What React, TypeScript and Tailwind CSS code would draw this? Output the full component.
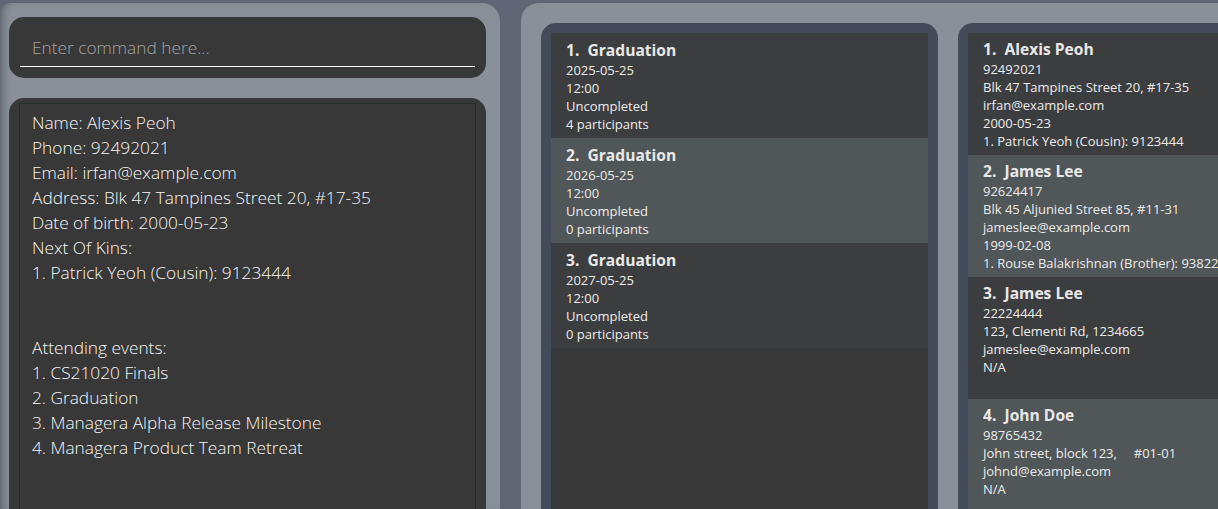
import React from "react";

interface EventData {
  title: string;
  date: string;
  time: string;
  status: string;
  participants: string;
}

interface PersonData {
  name: string;
  phone: string;
  address: string;
  email: string;
  dob: string;
  kin?: string;
}

const events: EventData[] = [
  { title: "Graduation", date: "2025-05-25", time: "12:00", status: "Uncompleted", participants: "4 participants" },
  { title: "Graduation", date: "2026-05-25", time: "12:00", status: "Uncompleted", participants: "0 participants" },
  { title: "Graduation", date: "2027-05-25", time: "12:00", status: "Uncompleted", participants: "0 participants" },
];

const persons: PersonData[] = [
  {
    name: "Alexis Peoh",
    phone: "92492021",
    address: "Blk 47 Tampines Street 20, #17-35",
    email: "irfan@example.com",
    dob: "2000-05-23",
    kin: "1. Patrick Yeoh (Cousin): 9123444",
  },
  {
    name: "James Lee",
    phone: "92624417",
    address: "Blk 45 Aljunied Street 85, #11-31",
    email: "jameslee@example.com",
    dob: "1999-02-08",
    kin: "1. Rouse Balakrishnan (Brother): 93822",
  },
  {
    name: "James Lee",
    phone: "22224444",
    address: "123, Clementi Rd, 1234665",
    email: "jameslee@example.com",
    dob: "N/A",
  },
  {
    name: "John Doe",
    phone: "98765432",
    address: "John street, block 123,     #01-01",
    email: "johnd@example.com",
    dob: "N/A",
  },
];

const detailLines = [
  "Name: Alexis Peoh",
  "Phone: 92492021",
  "Email: irfan@example.com",
  "Address: Blk 47 Tampines Street 20, #17-35",
  "Date of birth: 2000-05-23",
  "Next Of Kins:",
  "1. Patrick Yeoh (Cousin): 9123444",
  "",
  "",
  "Attending events:",
  "1. CS21020 Finals",
  "2. Graduation",
  "3. Managera Alpha Release Milestone",
  "4. Managera Product Team Retreat",
];

function EventCard({ item, index }: { item: EventData; index: number }) {
  return (
    <div
      className={`h-[105px] shrink-0 pl-[15px] pt-[6px] ${index % 2 === 1 ? "bg-[#515658]" : "bg-[#3c3d3f]"}`}
    >
      <div className="text-[15.6px] font-bold leading-[22px] text-[#e8e8e8] whitespace-pre">
        {index + 1}.  {item.title}
      </div>
      <div className="text-[13px] leading-[18px] text-[#ececec]">
        <div>{item.date}</div>
        <div>{item.time}</div>
        <div>{item.status}</div>
        <div>{item.participants}</div>
      </div>
    </div>
  );
}

function PersonCard({ item, index }: { item: PersonData; index: number }) {
  return (
    <div
      className={`h-[122px] shrink-0 pl-[15px] pt-[5px] ${index % 2 === 1 ? "bg-[#515658]" : "bg-[#3c3d3f]"}`}
    >
      <div className="text-[15.6px] font-bold leading-[22px] text-[#e8e8e8] whitespace-pre">
        {index + 1}.  {item.name}
      </div>
      <div className="text-[13px] leading-[18px] text-[#ececec] whitespace-pre">
        <div>{item.phone}</div>
        <div>{item.address}</div>
        <div>{item.email}</div>
        <div>{item.dob}</div>
        {item.kin && <div>{item.kin}</div>}
      </div>
    </div>
  );
}

export default function App() {
  return (
    <div
      className="w-[1218px] h-[509px] overflow-hidden bg-[#5f6675] pt-[3px] flex gap-[21px]"
      style={{ fontFamily: '"Open Sans", "Noto Sans", sans-serif' }}
    >
      {/* left side: command box + details */}
      <div className="w-[500px] shrink-0 bg-[#8a909a] rounded-tr-[18px] rounded-tl-[10px] shadow-[inset_8px_0_8px_-6px_rgba(40,44,54,0.55)] pl-[9px] pr-[14px] pt-[14px] flex flex-col gap-[20px]">
        <div className="h-[61px] bg-[#383838] rounded-[15px] px-[11px] pt-[12px]">
          <div className="border-b border-white h-[38px] pl-[12px] flex items-center">
            <input
              className="w-full bg-transparent outline-none text-[17.3px] font-light text-white placeholder:text-[#a3a3a3]"
              placeholder="Enter command here..."
            />
          </div>
        </div>
        <div className="flex-1 bg-[#383838] rounded-t-[15px] px-[10px] pt-[5px]">
          <div className="h-full border border-[#2c2c2c] border-b-0 pl-[12px] pt-[6px] text-[17.3px] font-light leading-[25px] text-[#f6f6f6]">
            {detailLines.map((line, i) => (
              <div key={i} className="h-[25px]">
                {line}
              </div>
            ))}
          </div>
        </div>
      </div>

      {/* right side: events + persons */}
      <div className="flex-1 bg-[#8a909a] rounded-tl-[18px] pl-[20px] pt-[20px] flex gap-[20px] min-w-0">
        <div className="w-[397px] shrink-0 bg-[#434a59] rounded-t-[15px] px-[10px] pt-[10px]">
          <div className="h-full bg-[#383838] flex flex-col">
            {events.map((e, i) => (
              <EventCard key={i} item={e} index={i} />
            ))}
          </div>
        </div>
        <div className="w-[400px] shrink-0 bg-[#434a59] rounded-t-[15px] pl-[10px] pt-[10px]">
          <div className="h-full bg-[#383838] flex flex-col overflow-hidden">
            {persons.map((p, i) => (
              <PersonCard key={i} item={p} index={i} />
            ))}
          </div>
        </div>
      </div>
    </div>
  );
}
